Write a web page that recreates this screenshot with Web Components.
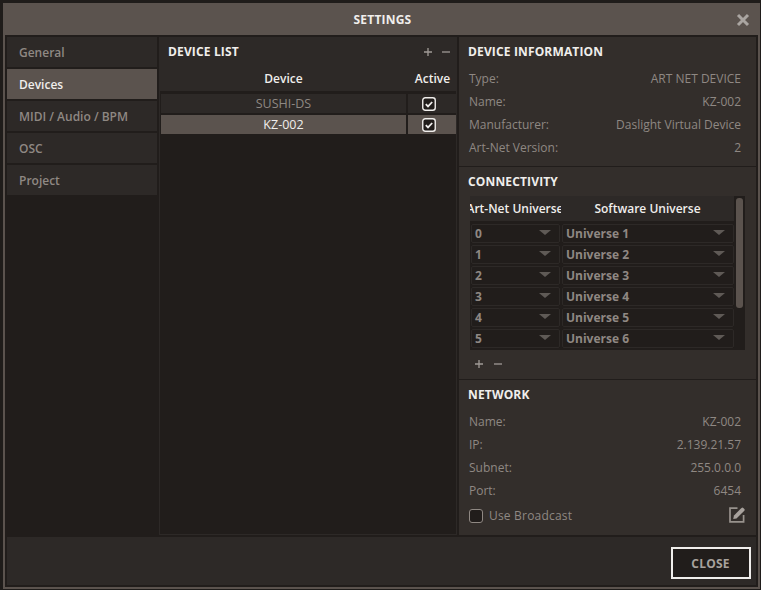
<!DOCTYPE html>
<html><head><meta charset="utf-8">
<style>
html,body{margin:0;padding:0;background:#1f1c1a;width:761px;height:590px;overflow:hidden}
body{font:13px/18px "Open Sans",sans-serif;color:#8f8883}
</style></head><body>
<template id="t-window"><style>
:host{display:flex;flex-direction:column;box-sizing:border-box;width:757px;height:586px;margin:3px 0 0 3px;background:#5b534e;padding:0 2px 2px}
.title{height:32px;flex:none;display:flex;align-items:center;justify-content:center;position:relative;color:#f0eeec;font-weight:700;font-size:12px;letter-spacing:.2px;box-sizing:border-box;padding:2px 0 0 2px}
.x{position:absolute;right:7px;top:9px;width:16px;height:16px}
.body{flex:1;background:#211d1b;display:flex;flex-direction:column;min-height:0}
.main{flex:1;display:flex;gap:2px;padding:2px 2px 2px 2px;min-height:0}
.foot{height:48px;flex:none;margin:0 2px 2px;background:#2d2927;display:flex;align-items:center;justify-content:flex-end;padding:4px 5px 0 0;box-sizing:border-box}
</style>
<div class="title"><slot name="title"></slot><svg class="x" viewBox="0 0 16 16"><path d="M3 3l10 10M13 3L3 13" stroke="#aaa5a1" stroke-width="3" fill="none"/></svg></div>
<div class="body"><div class="main"><slot></slot></div><div class="foot"><slot name="foot"></slot></div></div></template>

<template id="t-side"><style>:host{display:flex;flex-direction:column;gap:2px;width:150px;flex:none}</style><slot></slot></template>
<template id="t-nav"><style>
:host{display:flex;align-items:center;height:30px;padding:2px 12px 0;background:#2d2927;color:#8f8883;font-size:12px;font-weight:600;box-sizing:border-box}
:host([on]){background:#5b534e;color:#f0eeec}
</style><slot></slot></template>

<template id="t-list"><style>
:host{display:flex;flex-direction:column;width:298px;flex:none;border:1px solid #2d2927;border-top:0;box-sizing:border-box;margin-left:0}
.hd{height:29px;flex:none;background:#2d2927;display:flex;align-items:center;justify-content:space-between;padding:0 6px 0 9px;margin:0 -1px}
</style>
<div class="hd"><slot name="head"></slot><slot name="tools"></slot></div><slot></slot></template>

<template id="t-title"><style>:host{display:block;color:#f0eeec;font-weight:700;font-size:12px;line-height:18px;letter-spacing:.15px}</style><slot></slot></template>
<template id="t-tools"><style>:host{display:inline-flex;gap:var(--gap,9px);align-items:center}svg{width:10px;height:10px;display:block}</style>
<svg viewBox="0 0 10 10"><path d="M1 5h8M5 1v8" stroke="#a09a96" stroke-width="1.3" fill="none"/></svg><svg viewBox="0 0 10 10"><path d="M1 5h8" stroke="#a09a96" stroke-width="1.3" fill="none"/></svg></template>

<template id="t-thead"><style>
:host{display:flex;height:25px;flex:none;background:#2d2927;color:#f0eeec;font-size:12px;font-weight:600;gap:2px;margin-bottom:3px}
div{display:flex;align-items:center;justify-content:center}
.a{flex:1}.b{width:47px;box-sizing:border-box;background:#2d2927}
</style><div class="a"><slot name="a"></slot></div><div class="b"><slot name="b"></slot></div></template>

<template id="t-row"><style>
:host{display:flex;height:19px;gap:2px;margin:0 0 2px 1px;flex:none;font-size:12.5px}
div{display:flex;align-items:center;justify-content:center;background:#2d2927;color:#8f8883}
.a{flex:1}.b{width:48px;flex:none;padding-right:6px;box-sizing:border-box}
:host([on]) div{background:#5b534e;color:#f0eeec}
svg{width:14px;height:14px;display:block}
</style><div class="a"><slot></slot></div><div class="b"><svg viewBox="0 0 14 14"><rect x=".75" y=".75" width="12.5" height="12.5" rx="2.5" fill="#211d1b" stroke="#f0eeec" stroke-width="1.4"/><path d="M3.8 7.2l2.2 2.2 4.2-4.4" stroke="#f0eeec" stroke-width="1.8" fill="none"/></svg></div></template>

<template id="t-right"><style>:host{display:flex;flex-direction:column;gap:1px;flex:1;min-width:0;background:#211d1b}</style><slot></slot></template>
<template id="t-sec"><style>
:host{display:block;background:#332e2b;padding:6px 9px 0;box-sizing:border-box;overflow:hidden}
</style><slot></slot></template>
<template id="t-kv"><style>
:host{display:flex;justify-content:space-between;height:23px;font-size:12px;line-height:18px;color:#8f8883;align-items:center;padding:0 6px 0 1px}
</style><span><slot name="k"></slot></span><span><slot name="v"></slot></span></template>

<template id="t-utable"><style>
:host{display:block;position:relative;height:154px;background:#211d1b;margin:5px 2px 0 2px;box-sizing:border-box;overflow:hidden}
.sb{position:absolute;right:2px;top:2px;width:7px;height:110px;background:#5b534e;border-radius:3px}
.h{display:flex;height:25px;color:#f0eeec;font-weight:600;font-size:12px;background:#2d2927;margin-right:11px;gap:2px;margin-bottom:3px}
.h div{display:flex;align-items:center;justify-content:center;background:#2d2927;overflow:hidden;white-space:nowrap}
.h1{width:91px;flex:none}.h2{flex:1;box-sizing:border-box;padding-right:2px}
</style><div class="h"><div class="h1"><span style="margin-left:-1px">Art-Net Universe</span></div><div class="h2">Software Universe</div></div><slot></slot><div class="sb"></div></template>
<template id="t-urow"><style>
:host{display:flex;height:19px;gap:2px;margin:0 11px 2px 1px;font-size:12px;font-weight:700;color:#8f8883}
div{display:flex;align-items:center;justify-content:space-between;box-sizing:border-box;height:19px;border:1px solid #2d2927;border-radius:2px;background:#211d1b;padding:0 8px 0 3px}
.a{width:89px;flex:none}.b{flex:1}
i{width:0;height:0;border:6px solid transparent;border-top:5px solid #5f5a56;border-bottom:0;margin-top:-3px}
</style><div class="a"><span><slot name="a"></slot></span><i></i></div><div class="b"><span><slot name="b"></slot></span><i></i></div></template>

<template id="t-use"><style>
:host{display:flex;align-items:center;height:26px;font-size:12px;color:#8f8883;padding:2px 2px 0 1px;box-sizing:border-box;letter-spacing:.2px}
.c{width:14px;height:14px;border:1.3px solid #8f8883;border-radius:3px;box-sizing:border-box;background:#211d1b;margin-right:6px}
svg{margin-left:auto;width:16px;height:16px;display:block;margin-top:-3px}
</style><div class="c"></div><slot></slot><svg viewBox="0 0 16 16"><path d="M8.5 1.2H1v13.6h13.6V8" fill="none" stroke="#98928d" stroke-width="1.7"/><path d="M4.2 12l.8-3.4 6.4-6.6 1.1-1.1a1.3 1.3 0 0 1 1.8 0l1 1a1.3 1.3 0 0 1 0 1.8l-7.8 7.7z" fill="#a8a29d"/></svg></template>

<template id="t-close"><style>
:host{display:flex;align-items:center;justify-content:center;width:80px;height:32px;box-sizing:border-box;border:2px solid #f0eeec;background:#211d1b;color:#a8a29d;font-weight:700;font-size:12px;letter-spacing:.2px;padding:1px 1px 0 0}
</style><slot></slot></template>

<x-window>
  <span slot="title">SETTINGS</span>
  <x-side>
    <x-nav>General</x-nav><x-nav on>Devices</x-nav><x-nav>MIDI / Audio / BPM</x-nav><x-nav>OSC</x-nav><x-nav>Project</x-nav>
  </x-side>
  <x-list>
    <x-title slot="head">DEVICE LIST</x-title><x-tools slot="tools" style="--gap:8px"></x-tools>
    <x-thead><span slot="a">Device</span><span slot="b">Active</span></x-thead>
    <x-row>SUSHI-DS</x-row><x-row on>KZ-002</x-row>
  </x-list>
  <x-right>
    <x-sec style="height:129px">
      <x-title style="margin-bottom:6px">DEVICE INFORMATION</x-title>
      <x-kv><span slot="k">Type:</span><span slot="v">ART NET DEVICE</span></x-kv>
      <x-kv><span slot="k">Name:</span><span slot="v">KZ-002</span></x-kv>
      <x-kv><span slot="k">Manufacturer:</span><span slot="v">Daslight Virtual Device</span></x-kv>
      <x-kv><span slot="k">Art-Net Version:</span><span slot="v">2</span></x-kv>
    </x-sec>
    <x-sec style="height:212px">
      <x-title>CONNECTIVITY</x-title>
      <x-utable>
        <x-urow><span slot="a">0</span><span slot="b">Universe 1</span></x-urow>
        <x-urow><span slot="a">1</span><span slot="b">Universe 2</span></x-urow>
        <x-urow><span slot="a">2</span><span slot="b">Universe 3</span></x-urow>
        <x-urow><span slot="a">3</span><span slot="b">Universe 4</span></x-urow>
        <x-urow><span slot="a">4</span><span slot="b">Universe 5</span></x-urow>
        <x-urow><span slot="a">5</span><span slot="b">Universe 6</span></x-urow>
      </x-utable>
      <x-tools style="margin:9px 0 0 6px"></x-tools>
    </x-sec>
    <x-sec style="flex:1">
      <x-title style="margin-bottom:6px">NETWORK</x-title>
      <x-kv><span slot="k">Name:</span><span slot="v">KZ-002</span></x-kv>
      <x-kv><span slot="k">IP:</span><span slot="v">2.139.21.57</span></x-kv>
      <x-kv><span slot="k">Subnet:</span><span slot="v">255.0.0.0</span></x-kv>
      <x-kv><span slot="k">Port:</span><span slot="v">6454</span></x-kv>
      <x-use>Use Broadcast</x-use>
    </x-sec>
  </x-right>
  <x-close slot="foot">CLOSE</x-close>
</x-window>
<script>
const map={'x-window':'t-window','x-side':'t-side','x-nav':'t-nav','x-list':'t-list','x-title':'t-title','x-tools':'t-tools','x-thead':'t-thead','x-row':'t-row','x-right':'t-right','x-sec':'t-sec','x-kv':'t-kv','x-utable':'t-utable','x-urow':'t-urow','x-use':'t-use','x-close':'t-close'};
for(const [n,t] of Object.entries(map)){
  customElements.define(n,class extends HTMLElement{constructor(){super();this.attachShadow({mode:'open'}).appendChild(document.getElementById(t).content.cloneNode(true));}});
}
</script>
</body></html>
